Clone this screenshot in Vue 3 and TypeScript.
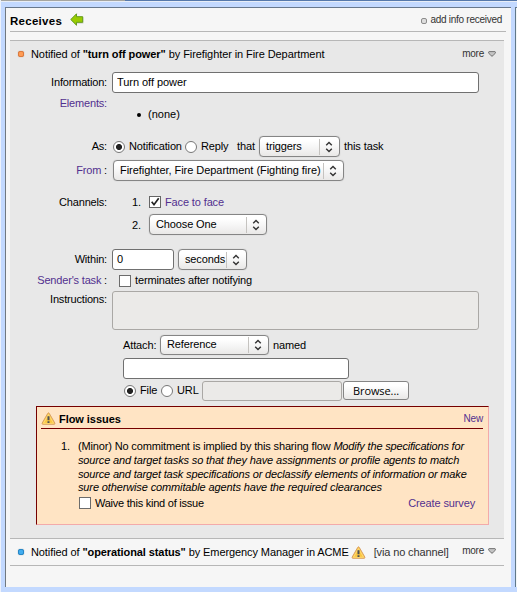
<script setup lang="ts">
import { defineComponent, h, ref } from 'vue'

const WarningIcon = defineComponent({
  render: () =>
    h('svg', { class: 'warning', width: 15, height: 13, viewBox: '0 0 15 13' }, [
      h('path', { d: 'M7.5 .8 Q8 .8 8.5 1.8 L13.8 11 Q14.3 12.3 13.2 12.3 H1.8 Q.7 12.3 1.2 11 L6.5 1.8 Q7 .8 7.5 .8Z', fill: '#fbc640', stroke: '#d9a066', 'stroke-width': 1 }),
      h('path', { d: 'M7.5 2.5 L12.6 11.3 H2.4Z', fill: 'none', stroke: '#ffe28a', 'stroke-width': 0.7 }),
      h('path', { d: 'M6.5 4.2h2v4h-2zM6.5 9.2h2v1.8h-2z', fill: '#4c4f55' }),
    ]),
})
const MoreIcon = defineComponent({
  render: () =>
    h('svg', { width: 8, height: 6, viewBox: '0 0 8 6' }, [
      h('path', { d: 'M1 .6H7Q8 1 7.3 2L5 4.7Q4 5.6 3 4.7L.7 2Q0 1 1 .6Z', fill: '#c4c4c4', stroke: '#777', 'stroke-width': 1 }),
    ]),
})
const Arrows = defineComponent({
  render: () =>
    h('svg', { width: 8, height: 12, viewBox: '0 0 8 12' }, [
      h('path', { d: 'M1.2 4.2L4 1.4L6.8 4.2M1.2 7.8L4 10.6L6.8 7.8', fill: 'none', stroke: '#333', 'stroke-width': 1.4 }),
    ]),
})

const information = ref('Turn off power')
const delay = ref('0')
</script>

<template>
  <div class="page">
    <div class="topline"><i></i><b></b></div>
    <main class="panel">
      <header class="head">
        <strong class="title">Receives</strong>
        <svg class="arrow" width="14" height="14" viewBox="0 0 14 14">
          <path d="M1.3 7.2L6.8 1.6V4.3H13.4V10.6H6.8V13.2Z" fill="#c9cbc4" />
          <path d="M.8 6.5L6.5 .8V3.7H12.7V9.3H6.5V12.2Z" fill="#99cc00" stroke="#649c1c" stroke-width="1" stroke-linejoin="round" />
        </svg>
        <span class="add"><i class="bullet"></i><span class="t-add">add info received</span></span>
      </header>

      <section class="flow open">
        <div class="flow-title">
          <i class="dot orange"></i>
          <span class="t-flow">Notified of <b>"turn off power"</b> by Firefighter in Fire Department</span>
          <span class="more"><span>more</span><MoreIcon /></span>
        </div>

        <div class="form">
          <label class="label">Information:</label>
          <div class="cell"><input v-model="information" class="box w-info" /></div>

          <a class="label link top">Elements:</a>
          <div class="cell none"><i class="disc"></i><span>(none)</span></div>

          <span class="label raised">As:</span>
          <div class="cell as">
            <i class="radio on"></i><span class="t-notification">Notification</span>
            <i class="radio"></i><span class="t-reply">Reply</span><span class="t-that">that</span>
            <div class="select w-trig"><span>triggers</span><Arrows /></div>
            <span class="t-this">this task</span>
          </div>

          <span class="label"><a class="link">From</a> :</span>
          <div class="cell"><div class="select w-from"><span class="t-from">Firefighter, Fire Department (Fighting fire)</span><Arrows /></div></div>

          <span class="label lowered">Channels:</span>
          <div class="cell channel lowered"><span>1.</span>
            <svg class="check" width="12" height="12" viewBox="0 0 12 12"><rect x=".5" y=".5" width="11" height="11" fill="#fff" stroke="#666" /><path d="M2.7 5.7L5 8.7L9.7 2.3" fill="none" stroke="#222" stroke-width="1.7" /></svg>
            <a class="link">Face to face</a>
          </div>
          <span></span>
          <div class="cell channel second"><span>2.</span><div class="select w-choose"><span>Choose One</span><Arrows /></div></div>

          <label class="label">Within:</label>
          <div class="cell"><input v-model="delay" class="box w-delay" /><div class="select w-sec"><span>seconds</span><Arrows /></div></div>

          <span class="label up"><a class="link">Sender's task</a> :</span>
          <div class="cell sender"><i class="check empty"></i><span class="up">terminates after notifying</span></div>

          <label class="label instructions">Instructions:</label>
          <div class="cell"><div class="box off area"></div></div>

          <div class="wide"><span class="t-attach">Attach:</span><div class="select w-ref"><span>Reference</span><Arrows /></div><span class="up">named</span></div>
          <div class="wide"><div class="box w-name"></div></div>
          <div class="wide source"><i class="radio on"></i><span class="t-file">File</span><i class="radio"></i><span class="t-url">URL</span><div class="box off w-url"></div><button class="browse">Browse...</button></div>
        </div>

        <div class="issues">
          <div class="issues-head"><WarningIcon /><strong class="t-issues">Flow issues</strong><a class="link new">New</a></div>
          <div class="issue">
            <span class="num">1.</span>
            <div class="lines">
              <div class="l1">(Minor) No commitment is implied by this sharing flow <em>Modify the specifications for</em></div>
              <div><em class="l2">source and target tasks so that they have assignments or profile agents to match</em></div>
              <div><em class="l3">source and target task specifications or declassify elements of information or make</em></div>
              <div><em class="l4">sure otherwise commitable agents have the required clearances</em></div>
            </div>
          </div>
          <div class="waive"><i class="check empty"></i><span class="t-waive">Waive this kind of issue</span><a class="link survey">Create survey</a></div>
        </div>
      </section>

      <section class="flow closed">
        <div class="flow-title">
          <i class="dot blue"></i>
          <span class="t-flow2">Notified of <b>"operational status"</b> by Emergency Manager in ACME</span>
          <WarningIcon />
          <span class="via">[via no channel]</span>
          <span class="more"><span>more</span><MoreIcon /></span>
        </div>
      </section>
    </main>
    <div class="next"></div>
  </div>
</template>

<style>
body { margin: 0; background: #c3d9ff; }
</style>
<style scoped>
* { box-sizing: border-box; }
svg { display: block; flex: none; }
i { flex: none; }
.page { width: 517px; height: 592px; overflow: hidden; background: #c3d9ff; border-left: 1px solid #edf2fb; font: 11px/14px "Liberation Sans", Arial, sans-serif; letter-spacing: -.13px; color: #000; white-space: nowrap; display: grid; grid-template: 7px 580px / 4px 506px 4px 2px; }
.topline { grid-column: 1 / -1; display: flex; height: 2px; margin-left: -1px; border-bottom: 1px solid #e9eef6; }
.topline i { width: 125px; background: #a5a5a0; }
.topline b { flex: 1; background: #5679ac; }
.panel { grid-column: 2; height: 580px; background: #f6f6f6; border-top: 1px solid #68788d; border-left: 1px solid #707880; padding: 0 5px 0 4px; }
.next { grid-column: 4; background: #f2f6f8; border-top: 1px solid #68788d; border-left: 1px solid #60788a; }
.head { height: 24px; border-bottom: 1px solid #b7b7b7; display: flex; align-items: center; }
.title { font-size: 11.5px; letter-spacing: .28px; width: 60px; padding-top: 2px; }
.arrow { margin-top: 1px; }
.add { margin-left: auto; display: flex; align-items: center; padding-right: 4px; color: #333; font-size: 10px; letter-spacing: -.27px; margin-top: 1px; }
.bullet { width: 6px; height: 6px; border: 1px solid #8c8c8c; border-radius: 2px; background: #ddd; margin: 2px 3px 0 0; }
.flow { width: 494px; border-top: 1px solid #b7b7b7; }
.open { margin-top: 8px; height: 498px; background: #e8e8e8; }
.closed { height: 28px; border-bottom: 1px solid #b7b7b7; }
.flow-title { display: flex; align-items: center; height: 27px; padding: 0 8px; }
.open .flow-title > .t-flow { padding-bottom: 2px; letter-spacing: -.08px; }
.t-flow2 { letter-spacing: -.095px; }
.closed .flow-title { height: 26px; }
.dot { width: 6px; height: 6px; border-radius: 2px; margin: -1px 7px 0 0; }
.orange { background: #ff9c55; border: 1px solid #dc7a3d; box-shadow: 0 0 1px #ba8a6b; }
.blue { background: #42adf0; border: 1px solid #2688c8; box-shadow: 0 0 1px #638ba5; }
.more { margin-left: auto; display: flex; align-items: center; gap: 4px; font-size: 10px; letter-spacing: -.25px; color: #333; margin-top: -2px; }
.closed .warning { margin-left: 2px; }
.via { margin-left: 8px; color: #333; }
.form { display: grid; grid-template-columns: 97px 1fr; column-gap: 5px; padding-top: 4px; grid-template-rows: 21px 43px 24px 21px 33px 35px 21px 21px 43px 23px 23px 21px; }
.label { text-align: right; align-self: center; padding-bottom: 1px; letter-spacing: -.18px; }
.label.top { align-self: start; padding-top: 3px; }
.label.raised { align-self: start; padding-top: 3px; }
.label.lowered { padding-top: 9px; }
.label.instructions { align-self: start; padding-top: 1px; }
.up { padding-bottom: 2px; }
.link { color: #52308f; }
.cell { display: flex; align-items: center; min-width: 0; }
.cell.lowered { padding-top: 9px; }
.box { height: 21px; border: 1px solid #707070; border-radius: 3px; background: #fff; font: inherit; letter-spacing: -.05px; color: inherit; padding: 0 4px 1px; outline: 0; margin: 0; }
.off { background: #ebeae8; border-color: #aaa8a5; }
.w-info { width: 367px; }
.none { padding-left: 25px; align-self: start; height: 43px; }
.none span { margin-left: 7px; padding-bottom: 1px; letter-spacing: 0; }
.disc { width: 4px; height: 4px; border-radius: 50%; background: #000; }
.as { align-items: start; line-height: 21px; }
.radio { width: 12px; height: 12px; border-radius: 50%; border: 1px solid #777; background: #fff; }
.radio.on { background: radial-gradient(circle at 50% 50%, #222 2.6px, #fff 3.5px); }
.as .radio { margin: 5px 4px 0 1px; }
.t-notification { width: 55px; }
.t-reply { width: 36px; }
.t-that { width: 22px; }
.as .t-that, .as .t-this { letter-spacing: -.1px; }
.select { display: flex; align-items: center; height: 21px; border: 1px solid #858585; border-radius: 4px; background: linear-gradient(#fff 20%, #f7f7f7 50%, #e9e8e7); box-shadow: 0 0 1px #aaa; line-height: 18px; padding: 0 6px; }
.select > svg { margin-left: auto; }
.select > span { flex: 1; border-right: 1px solid #c5c3c0; margin: 1px 5px 1px 0; height: 16px; line-height: 14px; }
.select > .t-from { letter-spacing: -.04px; }
.w-trig { width: 81px; }
.t-this { margin-left: 4px; }
.w-from { width: 231px; margin-left: 1px; }
.channel > span { width: 17px; margin-left: 20px; }
.check { width: 12px; height: 12px; margin-right: 4px; }
.check.empty { border: 1px solid #6c6c6c; background: #fff; }
.channel.second { align-self: start; }
.w-choose { width: 118px; }
.w-delay { width: 62px; margin-right: 4px; }
.w-sec { width: 69px; }
.sender { padding-left: 7px; }
.area { width: 367px; height: 39px; align-self: start; }
.wide { grid-column: 1 / -1; padding-left: 113px; display: flex; align-items: center; }
.t-attach { width: 37px; padding-bottom: 2px; }
.w-ref { width: 109px; height: 20px; margin-right: 4px; margin-top: -1px; }
.w-name { width: 226px; }
.source .radio { margin: 0 4px 0 1px; }
.t-file { width: 20px; padding-bottom: 1px; }
.t-url { width: 25px; padding-bottom: 1px; }
.w-url { width: 140px; height: 20px; margin-right: 1px; }
.browse { width: 66px; height: 19px; padding: 0; border: 1px solid #858585; border-radius: 3px; background: linear-gradient(#fff 20%, #f7f7f7 50%, #e9e8e7); font: 11px "Open Sans", sans-serif; letter-spacing: -.1px; line-height: 16px; }
.issues { margin: 5px 0 0 26px; width: 453px; height: 119px; background: #ffe4c4; border: 1px solid #f3aaaa; border-top-color: #750000; border-left-color: #750000; padding: 0 5px 0 4px; }
.issues-head { display: flex; align-items: center; height: 22px; border-bottom: 1px solid #750000; padding-top: 2px; }
.t-issues { margin-left: 3px; letter-spacing: -.05px; }
.new { margin-left: auto; font-size: 10px; }
.issue { display: flex; padding: 11px 0 0 20px; line-height: 13.75px; }
.num { width: 17px; }
.l1 { letter-spacing: -.15px; }
.l1 em { letter-spacing: -.18px; }
.l2 { letter-spacing: -.15px; }
.l3 { letter-spacing: -.165px; }
.l4 { letter-spacing: -.13px; }
.waive { display: flex; align-items: center; height: 17px; padding: 0 8px 0 38px; margin-top: -1px; }
.t-waive { letter-spacing: -.24px; }
.survey { margin-left: auto; }
</style>
